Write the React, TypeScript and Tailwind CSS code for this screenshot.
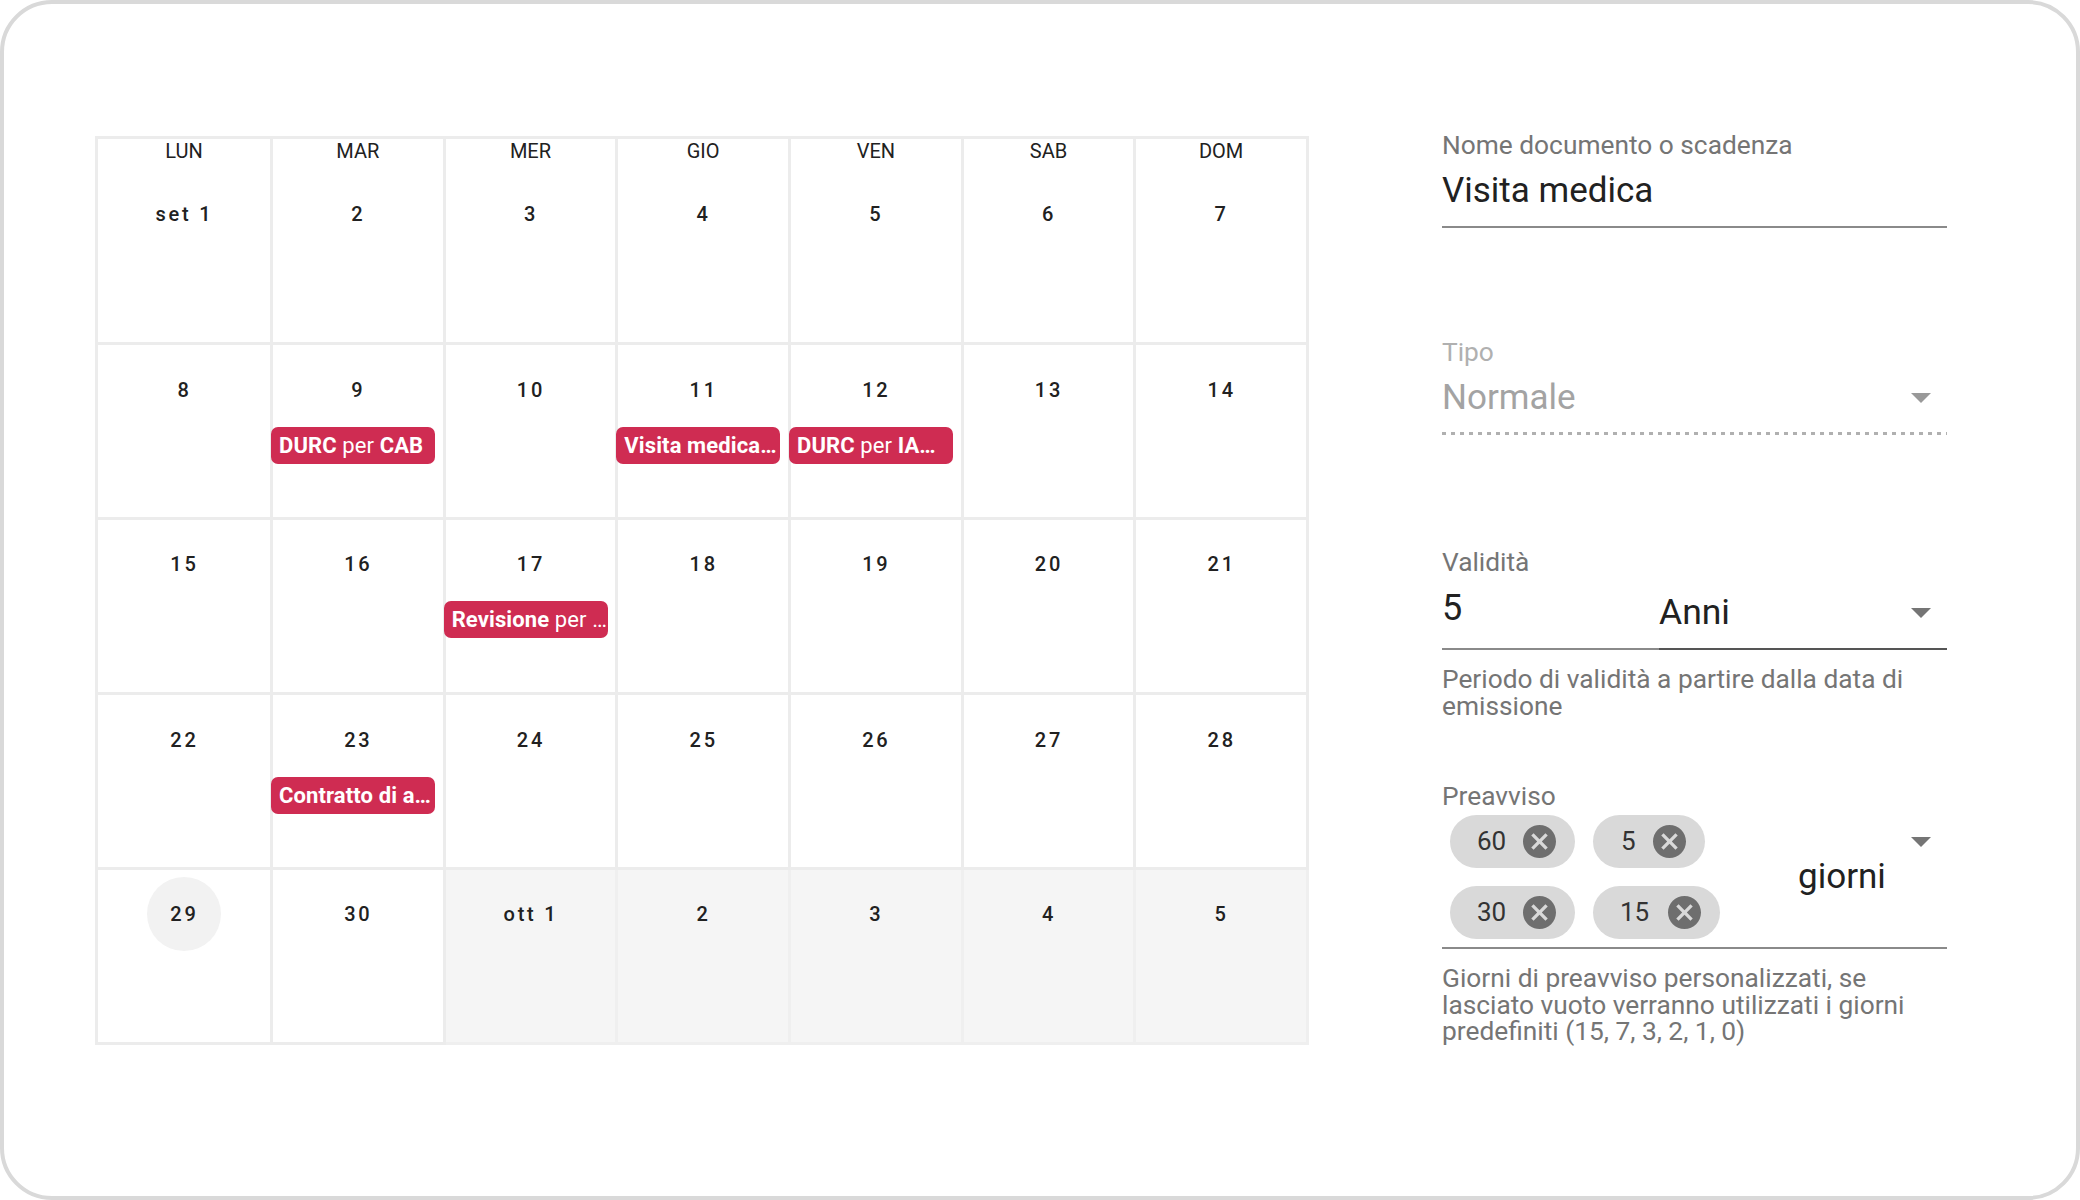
import React from 'react'

const headers = ['LUN', 'MAR', 'MER', 'GIO', 'VEN', 'SAB', 'DOM']

type Day = {
  label: string
  muted?: boolean
  today?: boolean
  event?: React.ReactNode
}

const weeks: Day[][] = [
  [{ label: 'set 1' }, { label: '2' }, { label: '3' }, { label: '4' }, { label: '5' }, { label: '6' }, { label: '7' }],
  [
    { label: '8' },
    { label: '9', event: <><b className="font-bold">DURC</b> per <b className="font-bold">CAB</b></> },
    { label: '10' },
    { label: '11', event: <b className="font-bold">Visita medica…</b> },
    { label: '12', event: <><b className="font-bold">DURC</b> per <b className="font-bold">IA…</b></> },
    { label: '13' },
    { label: '14' },
  ],
  [
    { label: '15' },
    { label: '16' },
    { label: '17', event: <><b className="font-bold">Revisione</b> per …</> },
    { label: '18' },
    { label: '19' },
    { label: '20' },
    { label: '21' },
  ],
  [
    { label: '22' },
    { label: '23', event: <b className="font-bold">Contratto di a…</b> },
    { label: '24' },
    { label: '25' },
    { label: '26' },
    { label: '27' },
    { label: '28' },
  ],
  [
    { label: '29', today: true },
    { label: '30' },
    { label: 'ott 1', muted: true },
    { label: '2', muted: true },
    { label: '3', muted: true },
    { label: '4', muted: true },
    { label: '5', muted: true },
  ],
]

const Arrow = ({ className }: { className: string }) => (
  <svg viewBox="0 0 10 5" className={`absolute right-[16px] w-[20px] h-[10px] ${className}`}>
    <path d="M0 0l5 5 5-5z" fill="currentColor" />
  </svg>
)

const Chip = ({ value, className }: { value: string; className: string }) => (
  <div className={`h-[53px] rounded-full bg-[#d9d9d9] flex items-center justify-between pr-[19px] text-[26px] text-[#333333] ${className}`}>
    <span>{value}</span>
    <svg viewBox="2 2 20 20" className="w-[33px] h-[33px] text-[#6e6e6e]">
      <path
        fill="currentColor"
        d="M12 2C6.47 2 2 6.47 2 12s4.47 10 10 10 10-4.47 10-10S17.53 2 12 2zm5 13.59L15.59 17 12 13.41 8.41 17 7 15.59 10.59 12 7 8.41 8.41 7 12 10.59 15.59 7 17 8.41 13.41 12 17 15.59z"
      />
    </svg>
  </div>
)

export default function App() {
  return (
    <div className="w-[2080px] h-[1200px] bg-white border-4 border-[#d9d9d9] rounded-[52px] flex items-start pl-[91px] pt-[126px] font-['Roboto',sans-serif]">
      {/* Calendar */}
      <div className="mt-[6px] w-[1214px] grid grid-cols-[175px_repeat(6,1fr)] border-t-[3px] border-l-[3px] border-[#ececec]">
        {weeks.map((week, w) =>
          week.map((day, d) => (
            <div
              key={`${w}-${d}`}
              className={`flex flex-col items-center border-r-[3px] border-b-[3px] text-[#212121] ${
                w === 0 ? 'h-[206px]' : 'h-[175px]'
              } ${w === 1 || w === 3 ? 'pt-[29.5px]' : ''} ${w === 2 || w === 4 ? 'pt-[28.5px]' : ''} ${
                day.muted ? 'bg-[#f5f5f5] border-[#efefef]' : 'border-[#ececec]'
              }`}
            >
              {w === 0 && (
                <div className="h-[24px] leading-[24px] text-[20px] mb-[36px]">{headers[d]}</div>
              )}
              <div
                className={`pl-[1px] h-[30px] flex items-center justify-center text-[20px] leading-[30px] font-medium tracking-[0.14em] ${
                  day.today ? 'w-[74px] !h-[74px] -my-[22px] rounded-full bg-[#f2f2f2]' : ''
                }`}
              >
                {day.label}
              </div>
              {day.event && (
                <div className="mt-[22.5px] -ml-[2px] self-start w-[164px] h-[37px] leading-[37px] rounded-[7px] bg-[#cf2c52] text-white text-[22px] tracking-[0.005em] pl-[8px] whitespace-nowrap overflow-hidden">
                  {day.event}
                </div>
              )}
            </div>
          )),
        )}
      </div>

      {/* Form */}
      <div className="ml-[133px] w-[505px] flex flex-col">
        <div className="h-[30px] leading-[30px] text-[26.3px] text-[#757575]">Nome documento o scadenza</div>
        <div className="mt-[9px] pb-[13px] border-b-2 border-[#8a8a8a]">
          <div className="h-[44px] leading-[44px] text-[35px] text-[#212121]">Visita medica</div>
        </div>

        <div className="mt-[109px] h-[30px] leading-[30px] text-[26.3px] text-[#b0b0b0]">Tipo</div>
        <div className="relative mt-[9px] pb-[13px]">
          <div className="h-[44px] leading-[44px] text-[35px] text-[#a3a3a3]">Normale</div>
          <Arrow className="top-[17px] text-[#999999]" />
          <div className="mt-[12px] h-[3px] bg-[linear-gradient(to_right,#b0b0b0_50%,transparent_0%)] bg-[length:9px_3px] bg-repeat-x" />
        </div>

        <div className="mt-[99px] h-[30px] leading-[30px] text-[26.3px] text-[#757575]">Validità</div>
        <div className="mt-[9px] flex">
          <div className="w-[217px] pb-[18px] border-b-2 border-[#8a8a8a]">
            <div className="h-[44px] leading-[44px] text-[36px] text-[#212121]">5</div>
          </div>
          <div className="relative flex-1 pt-[4px] pb-[14px] border-b-2 border-[#555555]">
            <div className="h-[44px] leading-[44px] text-[35.5px] text-[#212121]">Anni</div>
            <Arrow className="top-[22px] text-[#757575]" />
          </div>
        </div>
        <div className="mt-[16px] text-[26.3px] leading-[26.5px] text-[#757575]">
          Periodo di validità a partire dalla data di emissione
        </div>

        <div className="mt-[62px] h-[30px] leading-[30px] text-[26.3px] text-[#757575]">Preavviso</div>
        <div className="relative mt-[4px] pb-[8px] border-b-2 border-[#8a8a8a] flex items-center">
          <div className="ml-[8px] w-[300px] flex flex-wrap gap-x-[18px] gap-y-[18px]">
            <Chip value="60" className="w-[125px] pl-[27px]" />
            <Chip value="5" className="w-[112px] pl-[28px]" />
            <Chip value="30" className="w-[125px] pl-[27px]" />
            <Chip value="15" className="w-[127px] pl-[27px]" />
          </div>
          <div className="ml-[48px] h-[44px] leading-[44px] text-[35px] text-[#212121]">giorni</div>
          <Arrow className="top-[22px] text-[#757575]" />
        </div>
        <div className="mt-[16px] text-[26.3px] leading-[26.5px] text-[#757575]">
          Giorni di preavviso personalizzati, se lasciato vuoto verranno utilizzati i giorni predefiniti (15, 7, 3, 2, 1, 0)
        </div>
      </div>
    </div>
  )
}
